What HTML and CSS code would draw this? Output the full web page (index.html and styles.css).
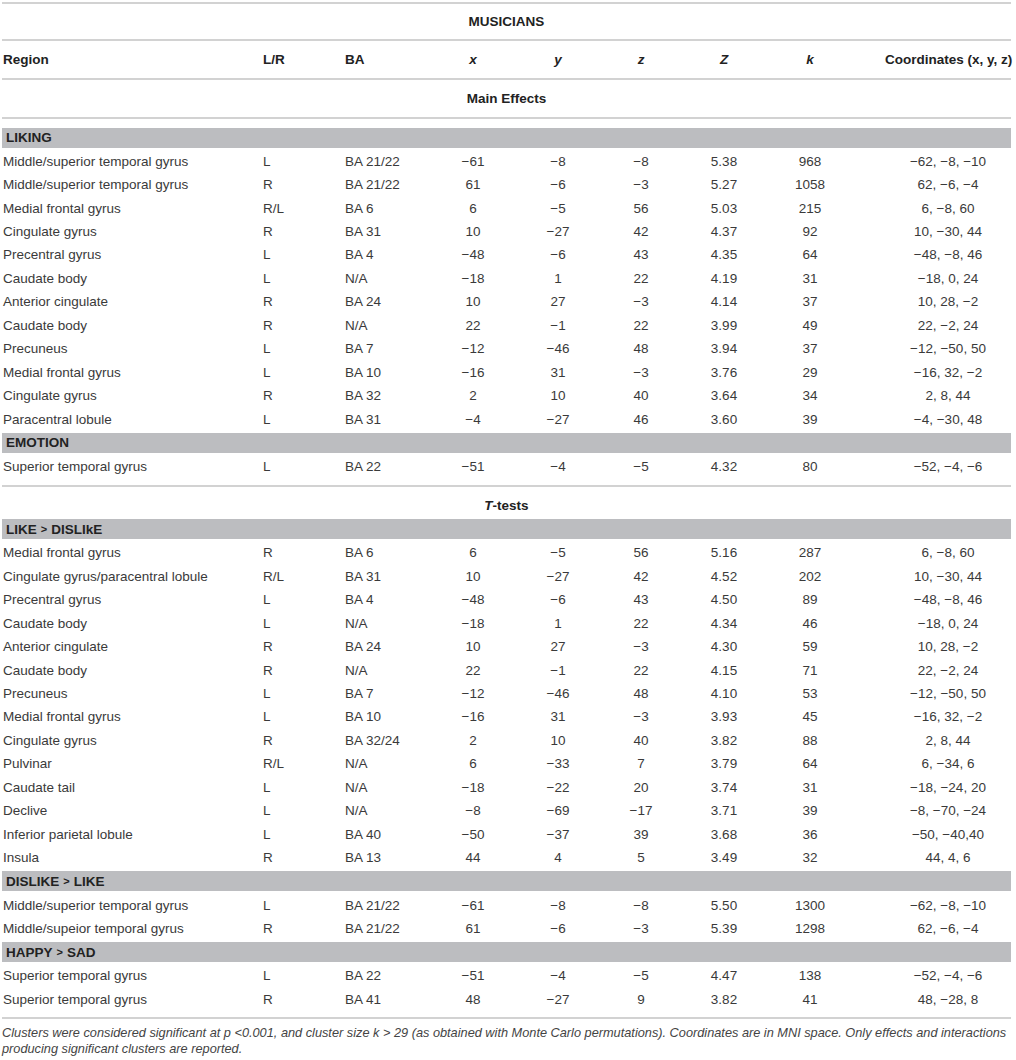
FILE: index.html
```html
<!DOCTYPE html>
<html lang="en">
<head>
<meta charset="utf-8">
<title>Musicians – clusters</title>
<link rel="stylesheet" href="styles.css">
</head>
<body>
<div class="tbl">
  <div class="title">MUSICIANS</div>
  <div class="row head">
    <span class="c1">Region</span><span class="c2">L/R</span><span class="c3">BA</span>
    <span class="n"><i>x</i></span><span class="n"><i>y</i></span><span class="n"><i>z</i></span>
    <span class="n"><i>Z</i></span><span class="n"><i>k</i></span><span class="co">Coordinates (x, y, z)</span>
  </div>
  <div class="group">Main Effects</div>
  <div class="section">
    <div class="band">LIKING</div>
    <div class="row"><span class="c1">Middle/superior temporal gyrus</span><span class="c2">L</span><span class="c3">BA 21/22</span><span class="n">−61</span><span class="n">−8</span><span class="n">−8</span><span class="n">5.38</span><span class="n">968</span><span class="co">−62, −8, −10</span></div>
    <div class="row"><span class="c1">Middle/superior temporal gyrus</span><span class="c2">R</span><span class="c3">BA 21/22</span><span class="n">61</span><span class="n">−6</span><span class="n">−3</span><span class="n">5.27</span><span class="n">1058</span><span class="co">62, −6, −4</span></div>
    <div class="row"><span class="c1">Medial frontal gyrus</span><span class="c2">R/L</span><span class="c3">BA 6</span><span class="n">6</span><span class="n">−5</span><span class="n">56</span><span class="n">5.03</span><span class="n">215</span><span class="co">6, −8, 60</span></div>
    <div class="row"><span class="c1">Cingulate gyrus</span><span class="c2">R</span><span class="c3">BA 31</span><span class="n">10</span><span class="n">−27</span><span class="n">42</span><span class="n">4.37</span><span class="n">92</span><span class="co">10, −30, 44</span></div>
    <div class="row"><span class="c1">Precentral gyrus</span><span class="c2">L</span><span class="c3">BA 4</span><span class="n">−48</span><span class="n">−6</span><span class="n">43</span><span class="n">4.35</span><span class="n">64</span><span class="co">−48, −8, 46</span></div>
    <div class="row"><span class="c1">Caudate body</span><span class="c2">L</span><span class="c3">N/A</span><span class="n">−18</span><span class="n">1</span><span class="n">22</span><span class="n">4.19</span><span class="n">31</span><span class="co">−18, 0, 24</span></div>
    <div class="row"><span class="c1">Anterior cingulate</span><span class="c2">R</span><span class="c3">BA 24</span><span class="n">10</span><span class="n">27</span><span class="n">−3</span><span class="n">4.14</span><span class="n">37</span><span class="co">10, 28, −2</span></div>
    <div class="row"><span class="c1">Caudate body</span><span class="c2">R</span><span class="c3">N/A</span><span class="n">22</span><span class="n">−1</span><span class="n">22</span><span class="n">3.99</span><span class="n">49</span><span class="co">22, −2, 24</span></div>
    <div class="row"><span class="c1">Precuneus</span><span class="c2">L</span><span class="c3">BA 7</span><span class="n">−12</span><span class="n">−46</span><span class="n">48</span><span class="n">3.94</span><span class="n">37</span><span class="co">−12, −50, 50</span></div>
    <div class="row"><span class="c1">Medial frontal gyrus</span><span class="c2">L</span><span class="c3">BA 10</span><span class="n">−16</span><span class="n">31</span><span class="n">−3</span><span class="n">3.76</span><span class="n">29</span><span class="co">−16, 32, −2</span></div>
    <div class="row"><span class="c1">Cingulate gyrus</span><span class="c2">R</span><span class="c3">BA 32</span><span class="n">2</span><span class="n">10</span><span class="n">40</span><span class="n">3.64</span><span class="n">34</span><span class="co">2, 8, 44</span></div>
    <div class="row"><span class="c1">Paracentral lobule</span><span class="c2">L</span><span class="c3">BA 31</span><span class="n">−4</span><span class="n">−27</span><span class="n">46</span><span class="n">3.60</span><span class="n">39</span><span class="co">−4, −30, 48</span></div>
    <div class="band">EMOTION</div>
    <div class="row"><span class="c1">Superior temporal gyrus</span><span class="c2">L</span><span class="c3">BA 22</span><span class="n">−51</span><span class="n">−4</span><span class="n">−5</span><span class="n">4.32</span><span class="n">80</span><span class="co">−52, −4, −6</span></div>
  </div>
  <div class="group sub"><span><i>T</i>-tests</span></div>
  <div class="section last">
    <div class="band">LIKE <span class="gt">&gt;</span> DISLIkE</div>
    <div class="row"><span class="c1">Medial frontal gyrus</span><span class="c2">R</span><span class="c3">BA 6</span><span class="n">6</span><span class="n">−5</span><span class="n">56</span><span class="n">5.16</span><span class="n">287</span><span class="co">6, −8, 60</span></div>
    <div class="row"><span class="c1">Cingulate gyrus/paracentral lobule</span><span class="c2">R/L</span><span class="c3">BA 31</span><span class="n">10</span><span class="n">−27</span><span class="n">42</span><span class="n">4.52</span><span class="n">202</span><span class="co">10, −30, 44</span></div>
    <div class="row"><span class="c1">Precentral gyrus</span><span class="c2">L</span><span class="c3">BA 4</span><span class="n">−48</span><span class="n">−6</span><span class="n">43</span><span class="n">4.50</span><span class="n">89</span><span class="co">−48, −8, 46</span></div>
    <div class="row"><span class="c1">Caudate body</span><span class="c2">L</span><span class="c3">N/A</span><span class="n">−18</span><span class="n">1</span><span class="n">22</span><span class="n">4.34</span><span class="n">46</span><span class="co">−18, 0, 24</span></div>
    <div class="row"><span class="c1">Anterior cingulate</span><span class="c2">R</span><span class="c3">BA 24</span><span class="n">10</span><span class="n">27</span><span class="n">−3</span><span class="n">4.30</span><span class="n">59</span><span class="co">10, 28, −2</span></div>
    <div class="row"><span class="c1">Caudate body</span><span class="c2">R</span><span class="c3">N/A</span><span class="n">22</span><span class="n">−1</span><span class="n">22</span><span class="n">4.15</span><span class="n">71</span><span class="co">22, −2, 24</span></div>
    <div class="row"><span class="c1">Precuneus</span><span class="c2">L</span><span class="c3">BA 7</span><span class="n">−12</span><span class="n">−46</span><span class="n">48</span><span class="n">4.10</span><span class="n">53</span><span class="co">−12, −50, 50</span></div>
    <div class="row"><span class="c1">Medial frontal gyrus</span><span class="c2">L</span><span class="c3">BA 10</span><span class="n">−16</span><span class="n">31</span><span class="n">−3</span><span class="n">3.93</span><span class="n">45</span><span class="co">−16, 32, −2</span></div>
    <div class="row"><span class="c1">Cingulate gyrus</span><span class="c2">R</span><span class="c3">BA 32/24</span><span class="n">2</span><span class="n">10</span><span class="n">40</span><span class="n">3.82</span><span class="n">88</span><span class="co">2, 8, 44</span></div>
    <div class="row"><span class="c1">Pulvinar</span><span class="c2">R/L</span><span class="c3">N/A</span><span class="n">6</span><span class="n">−33</span><span class="n">7</span><span class="n">3.79</span><span class="n">64</span><span class="co">6, −34, 6</span></div>
    <div class="row"><span class="c1">Caudate tail</span><span class="c2">L</span><span class="c3">N/A</span><span class="n">−18</span><span class="n">−22</span><span class="n">20</span><span class="n">3.74</span><span class="n">31</span><span class="co">−18, −24, 20</span></div>
    <div class="row"><span class="c1">Declive</span><span class="c2">L</span><span class="c3">N/A</span><span class="n">−8</span><span class="n">−69</span><span class="n">−17</span><span class="n">3.71</span><span class="n">39</span><span class="co">−8, −70, −24</span></div>
    <div class="row"><span class="c1">Inferior parietal lobule</span><span class="c2">L</span><span class="c3">BA 40</span><span class="n">−50</span><span class="n">−37</span><span class="n">39</span><span class="n">3.68</span><span class="n">36</span><span class="co">−50, −40,40</span></div>
    <div class="row"><span class="c1">Insula</span><span class="c2">R</span><span class="c3">BA 13</span><span class="n">44</span><span class="n">4</span><span class="n">5</span><span class="n">3.49</span><span class="n">32</span><span class="co">44, 4, 6</span></div>
    <div class="band">DISLIKE <span class="gt">&gt;</span> LIKE</div>
    <div class="row"><span class="c1">Middle/superior temporal gyrus</span><span class="c2">L</span><span class="c3">BA 21/22</span><span class="n">−61</span><span class="n">−8</span><span class="n">−8</span><span class="n">5.50</span><span class="n">1300</span><span class="co">−62, −8, −10</span></div>
    <div class="row"><span class="c1">Middle/supeior temporal gyrus</span><span class="c2">R</span><span class="c3">BA 21/22</span><span class="n">61</span><span class="n">−6</span><span class="n">−3</span><span class="n">5.39</span><span class="n">1298</span><span class="co">62, −6, −4</span></div>
    <div class="band">HAPPY <span class="gt">&gt;</span> SAD</div>
    <div class="row"><span class="c1">Superior temporal gyrus</span><span class="c2">L</span><span class="c3">BA 22</span><span class="n">−51</span><span class="n">−4</span><span class="n">−5</span><span class="n">4.47</span><span class="n">138</span><span class="co">−52, −4, −6</span></div>
    <div class="row"><span class="c1">Superior temporal gyrus</span><span class="c2">R</span><span class="c3">BA 41</span><span class="n">48</span><span class="n">−27</span><span class="n">9</span><span class="n">3.82</span><span class="n">41</span><span class="co">48, −28, 8</span></div>
  </div>
  <p class="note">Clusters were considered significant at <i>p</i> &lt;0.001, and cluster size <i>k</i> &gt; 29 (as obtained with Monte Carlo permutations). Coordinates are in MNI space. Only effects and interactions producing significant clusters are reported.</p>
</div>
</body>
</html>
```

FILE: styles.css
```css
* { box-sizing: border-box; }
html, body { margin: 0; padding: 0; background: #fff; }
body {
  font-family: "Liberation Sans", Arial, sans-serif;
  font-size: 13.5px;
  color: #3a3a3a;
}
.tbl {
  width: 1009px;
  margin: 2px 0 0 2px;
  border-top: 2px solid #d2d2d2;
}
.title, .group {
  display: flex;
  align-items: center;
  justify-content: center;
  font-weight: bold;
  color: #222;
  border-bottom: 2px solid #d2d2d2;
}
.title { height: 36.5px; }
.group { height: 39px; }
.group.sub { height: 30px; padding-top: 7px; border-bottom: 0; }
.group i { font-style: italic; }
.row {
  display: grid;
  grid-template-columns: 258px 82px 88px 86px 84px 82px 84px 88px 157px;
  align-items: center;
  height: 23.45px;
  white-space: nowrap;
}
.row.head {
  height: 39px;
  font-weight: bold;
  color: #222;
  border-bottom: 2px solid #d2d2d2;
}
.head i { font-style: italic; }
.c1 { padding-left: 1px; }
.c2, .c3 { padding-left: 3px; }
.n { text-align: center; }
.co { text-align: center; padding-left: 31px; }
.section {
  padding: 7px 0 7px;
  border-bottom: 2px solid #d2d2d2;
}
.section.last { padding-top: 0; padding-bottom: 6px; }
.band {
  height: 20px;
  margin: 2px 0;
  background: #bcbdc0;
  font-weight: bold;
  color: #222;
  padding-left: 4px;
  display: flex;
  align-items: center;
  gap: 4px;
}
.gt { font-size: 11px; }
.note {
  width: 1014px;
  margin: 6px 0 0 0;
  font-size: 12.75px;
  line-height: 15.5px;
  font-style: italic;
  color: #444;
}
```
